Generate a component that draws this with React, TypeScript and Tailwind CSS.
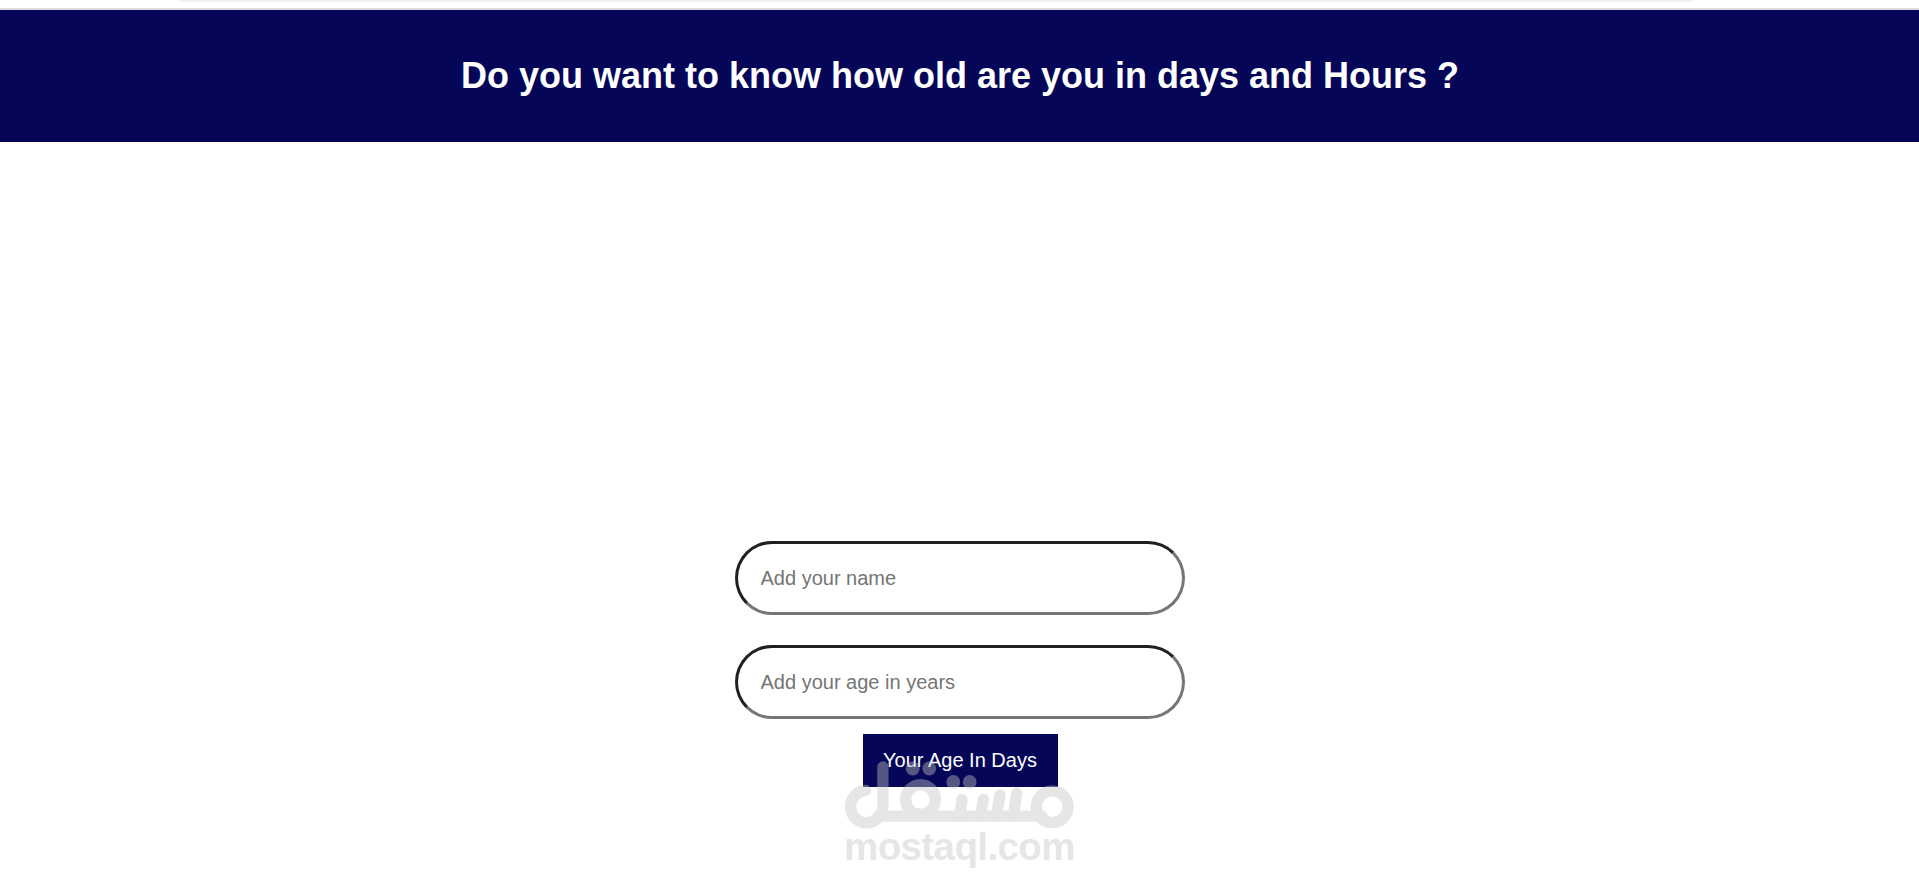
import React from 'react';

const inputClass =
    'w-[450px] h-[74px] px-[23px] rounded-full border-3 border-t-[#1f1f24] border-l-[#1f1f24] border-r-[#767676] border-b-[#767676] bg-white text-[20px] text-black placeholder:text-[#757575] outline-none';

// Brand mark drawn from plain strokes, it overlaps the bottom of the button
const Watermark: React.FC = () => (
    <div className="absolute top-[26px] left-[-19px] w-[233px] opacity-[0.42] pointer-events-none text-[#c5c5c5]">
        <svg viewBox="0 0 233 70" className="block w-[233px] h-[70px]" fill="none" stroke="currentColor" strokeWidth="11.3" strokeLinecap="round">
            <path d="M21.500 30.500A16.200 16.200 0 1 0 38.900 46.500V7M34 56.100H198" />
            <circle cx="76.500" cy="39.600" r="14.900" />
            <path d="M116 56L118 39.500M136.500 56L139.500 39.500M152.500 56L156 35M169.500 56L172.700 33.200" />
            <circle cx="208.200" cy="46.700" r="15.900" />
            <g fill="currentColor" stroke="none">
                <circle cx="68.700" cy="8.500" r="6.900" />
                <circle cx="85.200" cy="8.500" r="6.900" />
                <circle cx="109.300" cy="22" r="6.900" />
                <circle cx="125.700" cy="22" r="6.900" />
            </g>
        </svg>
        <div className="text-[38.5px] leading-[34px] font-bold tracking-[-0.6px]">mostaql.com</div>
    </div>
);

const App: React.FC = () => {
    return (
        <div className="h-[885px] overflow-hidden bg-white font-['Liberation_Sans',Arial,sans-serif]">
            <div className="h-[10px] border-b-2 border-[#dadadf]">
                <div className="ml-[179px] w-[1514px] h-[2px] rounded-b-full bg-[#f1f1f1]" />
            </div>

            <header className="h-[132px] pt-[45px] pl-px bg-[#050658] text-center text-white">
                <h1 className="text-[36px] leading-[42px] font-bold">
                    Do you want to know how old are you in days and Hours ?
                </h1>
            </header>

            <form className="flex flex-col items-center pt-[399px]">
                <input type="text" placeholder="Add your name" className={inputClass} />
                <input type="text" placeholder="Add your age in years" className={`${inputClass} mt-[30px]`} />
                <div className="relative mt-[15px] ml-[2px]">
                    <button type="button" className="block w-[195px] h-[53px] pb-[2px] pr-px bg-[#050658] text-[20px] text-white">
                        Your Age In Days
                    </button>
                    <Watermark />
                </div>
            </form>
        </div>
    );
};

export default App;
